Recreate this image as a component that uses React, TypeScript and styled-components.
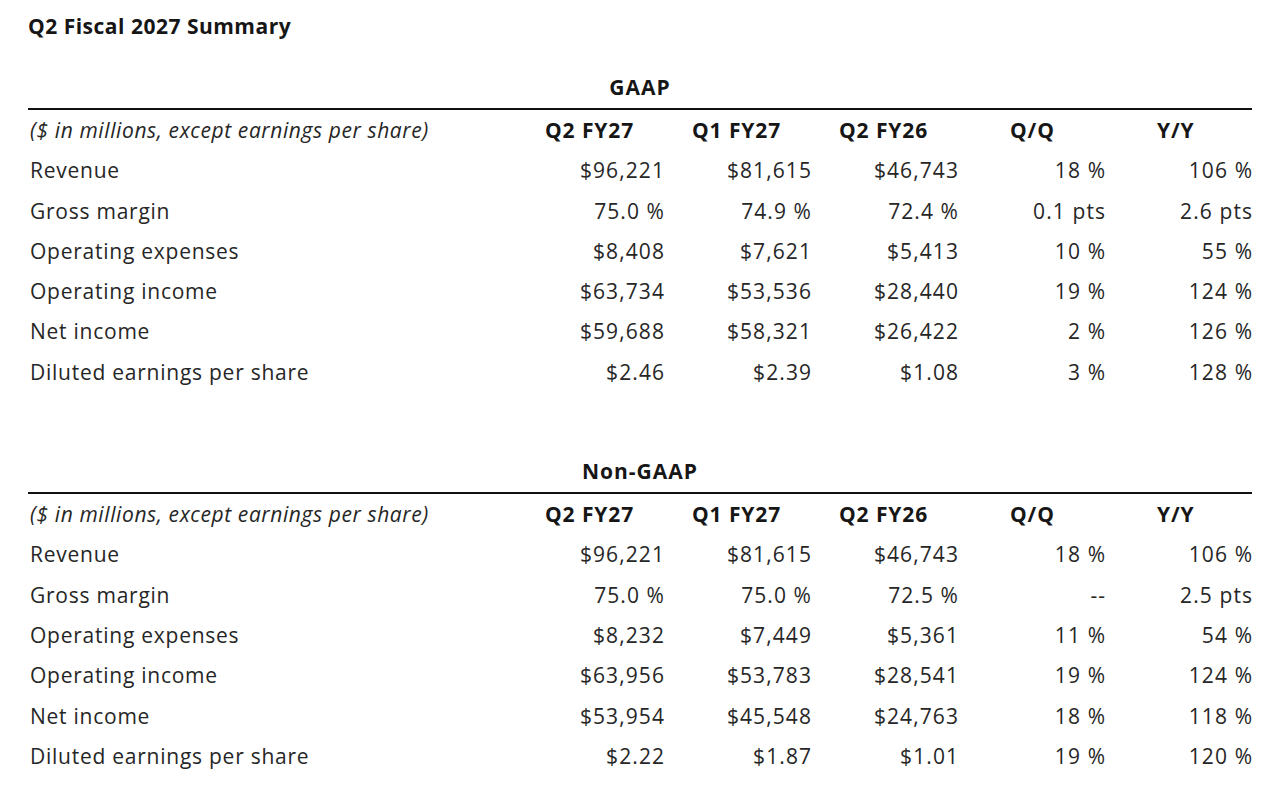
import React from 'react';
import styled, { createGlobalStyle } from 'styled-components';

type Row = [string, string, string, string, string, string];

const columns = ['Q2 FY27', 'Q1 FY27', 'Q2 FY26', 'Q/Q', 'Y/Y'];

const gaapRows: Row[] = [
  ['Revenue', '$96,221', '$81,615', '$46,743', '18 %', '106 %'],
  ['Gross margin', '75.0 %', '74.9 %', '72.4 %', '0.1 pts', '2.6 pts'],
  ['Operating expenses', '$8,408', '$7,621', '$5,413', '10 %', '55 %'],
  ['Operating income', '$63,734', '$53,536', '$28,440', '19 %', '124 %'],
  ['Net income', '$59,688', '$58,321', '$26,422', '2 %', '126 %'],
  ['Diluted earnings per share', '$2.46', '$2.39', '$1.08', '3 %', '128 %'],
];

const nonGaapRows: Row[] = [
  ['Revenue', '$96,221', '$81,615', '$46,743', '18 %', '106 %'],
  ['Gross margin', '75.0 %', '75.0 %', '72.5 %', '--', '2.5 pts'],
  ['Operating expenses', '$8,232', '$7,449', '$5,361', '11 %', '54 %'],
  ['Operating income', '$63,956', '$53,783', '$28,541', '19 %', '124 %'],
  ['Net income', '$53,954', '$45,548', '$24,763', '18 %', '118 %'],
  ['Diluted earnings per share', '$2.22', '$1.87', '$1.01', '19 %', '120 %'],
];

const GlobalStyle = createGlobalStyle`
  html, body {
    margin: 0;
    background: #ffffff;
  }
  body {
    font-family: "Open Sans", "Noto Sans", "Liberation Sans", sans-serif;
    color: #1c1c1c;
  }
`;

const Page = styled.div`
  padding: 12px 31px 0 28px;
`;

const Title = styled.h1`
  margin: 0;
  font-size: 21px;
  font-weight: 700;
  line-height: 28px;
  letter-spacing: 0.5px;
  color: #161616;
`;

const Section = styled.section<{ $top: number }>`
  margin-top: ${(p) => p.$top}px;
`;

const SectionHeading = styled.div`
  text-align: center;
  font-size: 21px;
  font-weight: 700;
  line-height: 28px;
  letter-spacing: 1px;
  color: #161616;
  padding-bottom: 7px;
  border-bottom: 2px solid #111;
`;

const Grid = styled.div`
  display: grid;
  grid-template-columns: 487px repeat(5, 119px);
  column-gap: 28px;
  padding-left: 2px;
`;

const HeadLabel = styled.div`
  font-size: 21px;
  font-style: italic;
  font-weight: 400;
  line-height: 40.3px;
  letter-spacing: 0.6px;
  color: #262626;
  white-space: nowrap;
`;

const HeadCell = styled.div<{ $indent: boolean }>`
  font-size: 21px;
  font-weight: 700;
  line-height: 40.3px;
  letter-spacing: 0.9px;
  color: #161616;
  white-space: nowrap;
  padding-left: ${(p) => (p.$indent ? 24 : 0)}px;
`;

const Label = styled.div`
  font-size: 21px;
  font-weight: 400;
  line-height: 40.3px;
  letter-spacing: 0.75px;
  color: #262626;
  white-space: nowrap;
`;

const Value = styled.div`
  font-size: 21px;
  font-weight: 400;
  line-height: 40.3px;
  letter-spacing: 1.1px;
  margin-right: -1.1px;
  text-align: right;
  color: #262626;
  white-space: nowrap;
`;

const Table: React.FC<{ heading: string; rows: Row[]; top: number }> = ({ heading, rows, top }) => (
  <Section $top={top}>
    <SectionHeading>{heading}</SectionHeading>
    <Grid>
      <HeadLabel>($ in millions, except earnings per share)</HeadLabel>
      {columns.map((c, i) => (
        <HeadCell key={c} $indent={i > 2}>
          {c}
        </HeadCell>
      ))}
      {rows.map((r) => (
        <React.Fragment key={r[0]}>
          <Label>{r[0]}</Label>
          {r.slice(1).map((v, i) => (
            <Value key={i}>{v}</Value>
          ))}
        </React.Fragment>
      ))}
    </Grid>
  </Section>
);

export default function App() {
  return (
    <Page>
      <GlobalStyle />
      <Title>Q2 Fiscal 2027 Summary</Title>
      <Table heading="GAAP" rows={gaapRows} top={33} />
      <Table heading="Non-GAAP" rows={nonGaapRows} top={65} />
    </Page>
  );
}
